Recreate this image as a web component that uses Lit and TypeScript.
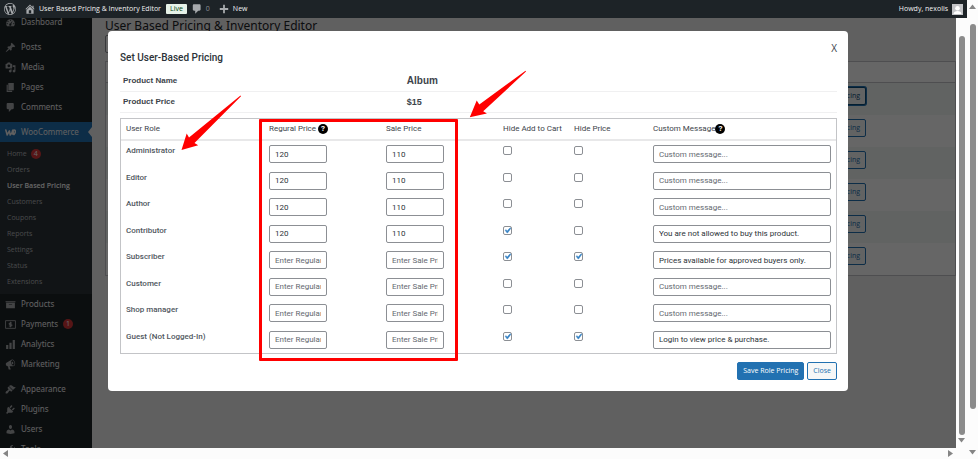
import { LitElement, html, css, svg, nothing } from "lit";
import { customElement, property, state } from "lit/decorators.js";
import { classMap } from "lit/directives/class-map.js";

const icons: Record<string, unknown> = {
  wordpress: svg`<path d="M20 10c0-5.51-4.49-10-10-10C4.48 0 0 4.49 0 10c0 5.52 4.48 10 10 10 5.51 0 10-4.48 10-10zM7.78 15.37L4.37 6.22c.55-.02 1.17-.08 1.17-.08.5-.06.44-1.13-.06-1.11 0 0-1.45.11-2.37.11-.18 0-.37 0-.58-.01C4.12 2.69 6.87 1.11 10 1.11c2.33 0 4.45.87 6.05 2.34-.68-.11-1.65.39-1.65 1.58 0 .74.45 1.36.9 2.1.35.61.55 1.36.55 2.46 0 1.49-1.4 5-1.4 5l-3.03-8.37c.54-.02.82-.17.82-.17.5-.05.44-1.25-.06-1.22 0 0-1.44.12-2.38.12-.87 0-2.33-.12-2.33-.12-.5-.03-.56 1.2-.06 1.22l.92.08 1.26 3.41zM17.41 10c.24-.64.74-1.87.43-4.25.7 1.29 1.05 2.71 1.05 4.25 0 3.29-1.73 6.24-4.4 7.78.97-2.59 1.94-5.2 2.92-7.78zM6.1 18.09C3.12 16.65 1.11 13.53 1.11 10c0-1.3.23-2.48.72-3.59C3.25 10.3 4.67 14.2 6.1 18.09zm4.03-6.63l2.58 6.98c-.86.29-1.76.45-2.71.45-.79 0-1.57-.11-2.29-.33.81-2.38 1.62-4.74 2.42-7.1z"/>`,
  home: svg`<path d="M16 8.5l1.53 1.53-1.06 1.06L10 4.6l-6.47 6.49-1.06-1.06L10 2.5l4 4v-2h2v4zm-6-2.46l6 5.99V18H4v-5.97zM12 17v-5H8v5h4z"/>`,
  comments: svg`<path d="M5 2h9c1.1 0 2 .9 2 2v7c0 1.1-.9 2-2 2h-2l-5 5v-5H5c-1.1 0-2-.9-2-2V4c0-1.1.9-2 2-2z"/>`,
  plus: svg`<path d="M8.5 3h3v5.5H17v3h-5.500V17h-3v-5.500H3v-3h5.500z"/>`,
  dashboard: svg`<path fill-rule="evenodd" d="M3.760 17h12.480c1.100-1.370 1.760-3.110 1.760-5 0-4.420-3.580-8-8-8s-8 3.580-8 8c0 1.890.660 3.630 1.760 5zM10 5a1 1 0 1 1 0 2 1 1 0 0 1 0-2zM5.500 7a1 1 0 1 1 0 2 1 1 0 0 1 0-2zM14 6.500L11.300 12.800a2 2 0 1 1-1.500-.800zM4 11a1 1 0 1 1 0 2 1 1 0 0 1 0-2zM16 11a1 1 0 1 1 0 2 1 1 0 0 1 0-2z"/>`,
  posts: svg`<path d="M10.440 3.020l1.820-1.820 6.360 6.350-1.830 1.820c-1.050-.68-2.480-.57-3.410.36l-.75.75c-.92.93-1.040 2.350-.35 3.410l-1.830 1.820-2.410-2.410-2.800 2.790c-.42.42-3.380 2.710-3.800 2.290s1.860-3.390 2.280-3.810l2.790-2.790L4.100 9.360l1.830-1.820c1.050.69 2.480.57 3.400-.36l.75-.75c.93-.92 1.050-2.350.36-3.410z"/>`,
  media: svg`<path d="M13 11V4c0-.55-.45-1-1-1h-1.670L9 1H5L3.670 3H2c-.55 0-1 .45-1 1v7c0 .55.45 1 1 1h10c.55 0 1-.45 1-1zM7 4.500c1.380 0 2.500 1.120 2.500 2.500S8.380 9.500 7 9.500 4.500 8.380 4.500 7 5.620 4.500 7 4.500zM14 6h5v10.500c0 1.380-1.120 2.500-2.500 2.500S14 17.880 14 16.500s1.120-2.500 2.500-2.500c.17 0 .34.02.5.05V9h-3V6zm-4 8.050V13h2v3.500c0 1.380-1.120 2.500-2.500 2.500S7 17.880 7 16.500 8.120 14 9.500 14c.17 0 .34.02.5.05z"/>`,
  pages: svg`<path d="M6 15V2h10v13H6zm-1 1h8v2H3V5h2v11z"/>`,
  woo: svg`<path d="M1.500 5.500L4 14.500 8 7l1.500 7.500C12 12 14 9 14.500 5.500 12 9 13 14 16.500 13.500c3-3 3-8 .5-8-2 0-3 4-1.500 6.500" fill="none" stroke="currentColor" stroke-width="2.800" stroke-linejoin="round" stroke-linecap="round"/>`,
  products: svg`<path d="M19 4v2H1V4h18zM2 7h16v10H2V7zm11 3V9H7v1h6z"/>`,
  payments: svg`<path fill="none" stroke="currentColor" stroke-width="1.600" d="M1 3h18v14H1z"/><path fill="none" stroke="currentColor" stroke-width="1.900" d="M12.800 7.200H9.200c-2.200 0-2.200 2.700 0 2.700h1.600c2.400 0 2.400 2.900 0 2.900H7M10 5v10"/>`,
  analytics: svg`<path d="M18 18V2h-4v16h4zm-6 0V7H8v11h4zm-6 0v-7H2v7h4z"/>`,
  marketing: svg`<path d="M18.150 5.940c.46 1.620.38 3.220-.02 4.480-.42 1.280-1.260 2.180-2.300 2.480-.16.06-.26.06-.4.06-.06.02-.12.02-.18.02-.06.02-.14.02-.22.02h-6.800l2.220 5.500c.02.14-.06.26-.14.34-.08.1-.24.16-.34.16H6.950c-.1 0-.26-.06-.34-.16-.08-.08-.16-.2-.14-.34l-1-5.500H4.250l-.02-.02c-.5.06-1.080-.18-1.540-.62s-.88-1.080-1.060-1.880c-.24-.8-.2-1.560-.02-2.200.18-.62.58-1.080 1.060-1.300l.02-.02 9-5.400c.1-.06.18-.1.24-.16.06-.04.14-.08.24-.12.16-.08.28-.12.5-.18 1.040-.3 2.240.1 3.220.98s1.840 2.240 2.260 3.860zm-2.580 5.980h-.02c.4-.1.74-.34 1.040-.7.58-.7.86-1.760.86-3.040 0-.64-.1-1.300-.28-1.980-.34-1.360-1.020-2.500-1.780-3.240s-1.680-1.100-2.460-.88c-.82.22-1.400.96-1.700 2-.32 1.040-.28 2.360.06 3.720.38 1.360 1 2.500 1.800 3.240.78.74 1.620 1.100 2.480.88zm-2.540-7.080c.22-.04.42-.02.62.04.38.16.76.48 1.020 1s.42 1.200.42 1.780c0 .3-.04.56-.12.8-.18.48-.44.84-.86.94-.34.1-.8-.06-1.140-.4s-.64-.86-.78-1.500c-.18-.62-.12-1.240.02-1.720s.48-.84.82-.94z"/>`,
  appearance: svg`<path d="M14.480 11.060L7.410 3.990l1.500-1.500c.5-.56 2.300-.47 3.510.32 1.210.8 1.430 1.280 2.910 2.100 1.180.64 2.450 1.260 4.450.85zm-.71.71L6.700 4.700 4.930 6.470c-.39.39-.39 1.020 0 1.410l1.060 1.060c.39.39.39 1.030 0 1.420-.6.6-1.430 1.110-2.210 1.690-.35.26-.7.53-1.010.84C1.430 14.230.4 16.080 1.400 17.070c.99 1 2.840-.03 4.180-1.360.31-.31.58-.66.85-1.020.57-.78 1.080-1.610 1.690-2.210.39-.39 1.020-.39 1.410 0l1.060 1.060c.39.39 1.020.39 1.410 0z"/>`,
  plugins: svg`<path d="M13.110 4.360L9.870 7.600 8 5.730l3.240-3.240c.35-.34 1.050-.2 1.560.32.52.51.66 1.210.31 1.550zm-8 1.770l.91-1.120 9.010 9.010-1.190.84c-.71.71-2.630 1.160-3.820 1.160H6.140L4.900 17.260c-.59.59-1.540.59-2.120 0-.59-.58-.59-1.530 0-2.120l1.240-1.240v-3.880c0-1.130.4-3.190 1.090-3.890zm7.260 3.970l3.240-3.240c.34-.35 1.040-.21 1.550.31.52.51.66 1.210.31 1.550l-3.240 3.250z"/>`,
  users: svg`<path d="M10 9.250c-2.270 0-2.730-3.440-2.730-3.440C7 4.020 7.820 2 9.970 2c2.160 0 2.980 2.020 2.710 3.810 0 0-.41 3.440-2.680 3.440zm0 2.570L12.720 10c2.390 0 4.520 2.330 4.520 4.530v2.490s-3.650 1.130-7.240 1.130c-3.650 0-7.240-1.130-7.240-1.130v-2.490c0-2.250 1.940-4.480 4.470-4.480z"/>`,
  tools: svg`<path d="M16.680 9.770c-1.340 1.340-3.300 1.670-4.950.99l-5.410 6.520c-.99.99-2.590.99-3.580 0s-.99-2.590 0-3.570l6.520-5.420c-.68-1.650-.35-3.610.99-4.950 1.280-1.280 3.120-1.620 4.720-1.060l-2.890 2.890 2.820 2.820 2.860-2.870c.53 1.580.18 3.390-1.080 4.650z"/>`,
};

@customElement("wp-icon")
class WpIcon extends LitElement {
  @property() name = "";
  static styles = css`
    :host { display: block; width: 12px; height: 12px; flex: none; }
    svg { display: block; width: 100%; height: 100%; fill: currentColor; }
  `;
  render() {
    return html`<svg viewBox="0 0 20 20" aria-hidden="true">${icons[this.name]}</svg>`;
  }
}

@customElement("admin-bar")
class AdminBar extends LitElement {
  static styles = css`
    :host {
      display: flex; align-items: center; height: 18px; padding: 0 4px;
      background: #1d2327; color: #f0f0f1;
      font: 500 7px/12px "Open Sans", "Noto Sans", sans-serif;
    }
    a { display: flex; align-items: center; color: inherit; text-decoration: none; }
    wp-icon { color: #a7aaad; }
    .home { margin-left: 8px; gap: 3px; }
    .live {
      margin-left: 5px; padding: 0 4px; line-height: 10px; border-radius: 1px;
      background: #e6f2e8; color: #00450c;
    }
    .comments { margin-left: 4px; gap: 3px; color: #8c8f94; font-weight: 400; }
    .new { margin-left: 8px; gap: 3px; }
    .account { margin-left: auto; gap: 4px; }
    .avatar { width: 11px; height: 11px; background: #c3c4c7; fill: #fff; }
  `;
  render() {
    return html`
      <a href="#" aria-label="About WordPress"><wp-icon name="wordpress"></wp-icon></a>
      <a class="home" href="#"><wp-icon name="home"></wp-icon>User Based Pricing &amp; Inventory Editor</a>
      <span class="live">Live</span>
      <a class="comments" href="#"><wp-icon name="comments"></wp-icon>0</a>
      <a class="new" href="#"><wp-icon name="plus"></wp-icon>New</a>
      <a class="account" href="#">Howdy, nexolis
        <svg class="avatar" viewBox="0 0 11 11" aria-hidden="true"><circle cx="5.500" cy="4.300" r="2.300"/><path d="M1.500 10c0-4 8-4 8 0z"/></svg>
      </a>
    `;
  }
}

interface MenuItem { icon: string; label: string; count?: number; }

const menuGroups: MenuItem[][] = [
  [{ icon: "dashboard", label: "Dashboard" }],
  [
    { icon: "posts", label: "Posts" },
    { icon: "media", label: "Media" },
    { icon: "pages", label: "Pages" },
    { icon: "comments", label: "Comments" },
  ],
  [
    { icon: "woo", label: "WooCommerce" },
    { icon: "products", label: "Products" },
    { icon: "payments", label: "Payments", count: 1 },
    { icon: "analytics", label: "Analytics" },
    { icon: "marketing", label: "Marketing" },
  ],
  [
    { icon: "appearance", label: "Appearance" },
    { icon: "plugins", label: "Plugins" },
    { icon: "users", label: "Users" },
    { icon: "tools", label: "Tools" },
  ],
];

const subMenu = ["Home", "Orders", "User Based Pricing", "Customers", "Coupons", "Reports", "Settings", "Status", "Extensions"];

@customElement("admin-menu")
class AdminMenu extends LitElement {
  static styles = css`
    :host {
      display: block; width: 92px; flex: none; overflow: hidden; background: #1d2327;
      color: #f0f0f1; font: 8px/12px "Noto Sans", "Open Sans", sans-serif;
    }
    nav { display: flex; flex-direction: column; gap: 5px; margin-top: -6px; }
    ul { list-style: none; margin: 0; padding: 0; }
    a { color: inherit; text-decoration: none; }
    .item { display: flex; align-items: center; height: 20px; padding-left: 5px; gap: 5px; }
    .item wp-icon { width: 11px; height: 11px; color: #a7aaad; }
    .current { background: #2271b1; position: relative; }
    .current wp-icon { color: #f0f0f1; }
    .current::after {
      content: ""; position: absolute; right: 0; top: 5px;
      border: 5px solid transparent; border-left: 0; border-right: 4px solid #f0f0f1;
    }
    .sub { padding: 4px 0; background: #2c3338; font: 7px/12px "Open Sans", "Noto Sans", sans-serif; color: #b4b7ba; }
    .sub a { display: flex; align-items: center; height: 16px; padding-left: 7px; gap: 4px; }
    .sub .here { color: #fff; font-weight: 600; }
    .count {
      width: 10px; border-radius: 5px; background: #d63638; color: #fff;
      font-size: 7px; line-height: 10px; text-align: center;
    }
  `;
  render() {
    return html`<nav aria-label="Main menu">
      ${menuGroups.map((group) => html`<ul>
        ${group.map((item) => html`<li>
          <a href="#" class=${classMap({ item: true, current: item.icon === "woo" })}>
            <wp-icon name=${item.icon}></wp-icon>${item.label}
            ${item.count ? html`<span class="count">${item.count}</span>` : nothing}
          </a>
          ${item.icon === "woo" ? html`<ul class="sub">
            ${subMenu.map((label) => html`<li><a href="#" class=${classMap({ here: label === "User Based Pricing" })}>${label}
              ${label === "Home" ? html`<span class="count">4</span>` : nothing}</a></li>`)}
          </ul>` : nothing}
        </li>`)}
      </ul>`)}
    </nav>`;
  }
}

@customElement("product-list")
class ProductList extends LitElement {
  static styles = css`
    :host {
      display: block; flex: 1; min-width: 0; padding-left: 13px; overflow: hidden;
      background: #f0f0f1; color: #1d2327; font: 7px/12px "Open Sans", "Noto Sans", sans-serif;
    }
    h1 { margin: 0; font: 400 12px/16px "Noto Sans", "Open Sans", sans-serif; }
    .search {
      display: block; box-sizing: border-box; width: 120px; height: 18px; margin: 1px 0 8px;
      border: 1px solid #8c8f94; border-radius: 2px; background: #fff;
    }
    .list { border: 1px solid #c3c4c7; background: #fff; }
    .head { height: 20px; border-bottom: 1px solid #c3c4c7; }
    .row { display: flex; align-items: flex-start; justify-content: flex-end; height: 28px; padding: 4px 89px 0 0; }
    .row:nth-child(even) { background: #f3f7f4; }
    button {
      height: 18px; padding: 0 5px; border: 1px solid #2271b1; border-radius: 2px;
      background: #f6f7f7; color: #2271b1; font: inherit;
    }
    .focused { border-color: #0a4b78; color: #0a4b78; box-shadow: 0 0 0 1px #2271b1; }
  `;
  render() {
    return html`
      <h1>User Based Pricing &amp; Inventory Editor</h1>
      <input class="search" type="search" aria-label="Search products" />
      <div class="list">
        <div class="head"></div>
        ${[0, 1, 2, 3, 4, 5].map((i) => html`<div class="row">
          <button class=${classMap({ focused: i === 0 })}>Set Pricing</button>
        </div>`)}
      </div>
    `;
  }
}

interface RoleRow { role: string; regular: string; sale: string; hideCart: boolean; hidePrice: boolean; message: string; }

@customElement("pricing-dialog")
class PricingDialog extends LitElement {
  @state() rows: RoleRow[] = [
    { role: "Administrator", regular: "120", sale: "110", hideCart: false, hidePrice: false, message: "" },
    { role: "Editor", regular: "120", sale: "110", hideCart: false, hidePrice: false, message: "" },
    { role: "Author", regular: "120", sale: "110", hideCart: false, hidePrice: false, message: "" },
    { role: "Contributor", regular: "120", sale: "110", hideCart: true, hidePrice: false, message: "You are not allowed to buy this product." },
    { role: "Subscriber", regular: "", sale: "", hideCart: true, hidePrice: true, message: "Prices available for approved buyers only." },
    { role: "Customer", regular: "", sale: "", hideCart: false, hidePrice: false, message: "" },
    { role: "Shop manager", regular: "", sale: "", hideCart: false, hidePrice: false, message: "" },
    { role: "Guest (Not Logged-In)", regular: "", sale: "", hideCart: true, hidePrice: true, message: "Login to view price & purchase." },
  ];
  static styles = css`
    :host {
      display: block; position: relative; box-sizing: border-box; width: 90%; max-width: 740px;
      padding: 10px 11px 11px 12px; border-radius: 4px; background: #fff; color: #3c434a;
      font: 8px/12px Roboto, "Noto Sans", sans-serif;
    }
    header { display: flex; justify-content: space-between; height: 24px; margin-bottom: 6px; }
    h2 { align-self: flex-end; margin: 0; font-size: 10px; line-height: 14px; font-weight: 500; color: #2c3338; }
    .dismiss { height: 14px; padding: 0; border: 0; background: none; color: #3c434a; font: 10px/14px "Open Sans", sans-serif; }
    table { width: 100%; border-spacing: 0; table-layout: fixed; }
    th, td { padding: 0; text-align: left; font-weight: 400; }
    .product { font: bold 8px/12px "Liberation Sans", Arial, sans-serif; }
    .product th, .product td { height: 20px; border-bottom: 1px solid #f0f0f1; font-weight: bold; }
    .product th { width: 40%; padding-left: 3px; box-sizing: border-box; }
    .product td { font-size: 10px; }
    .product .price { font-size: 9px; }
    .roles { height: 236px; margin-top: 5px; border: 1px solid #c3c4c7; }
    .roles th, .roles td { padding: 0 5px; vertical-align: top; }
    .roles thead th { height: 20px; border-bottom: 2px solid #e8e8e9; vertical-align: middle; white-space: nowrap; padding-right: 0; }
    .roles tbody th { padding-top: 4px; font-weight: 500; color: #50575e; }
    .c-role { width: 20%; } .c-price { width: 117px; } .c-cart { width: 71px; } .c-hide { width: 79px; }
    .help {
      display: inline-block; width: 10px; border-radius: 50%; background: #000; color: #fff;
      font-size: 8px; line-height: 10px; font-weight: 700; text-align: center;
    }
    .text {
      display: block; box-sizing: border-box; width: 58px; height: 18px; margin: 4px 0 0; padding: 0 5px;
      border: 1px solid #8c8f94; border-radius: 2px; background: #fff; color: #2c3338; font: inherit;
    }
    .wide { width: 100%; }
    .text::placeholder { color: #646970; opacity: 1; }
    .tick {
      display: block; appearance: none; width: 9px; height: 9px; margin: 5px 0 0;
      border: 1px solid #8c8f94; border-radius: 2px; background: #fff center / 11px no-repeat;
    }
    .tick:checked {
      background-image: url("data:image/svg+xml,%3Csvg xmlns='http://www.w3.org/2000/svg' viewBox='0 0 20 20'%3E%3Cpath d='M14.83 4.89l1.34.94-5.81 8.38H9.02L5.78 9.67l1.34-1.25 2.57 2.4z' fill='%233582c4' stroke='%233582c4'/%3E%3C/svg%3E");
    }
    footer { display: flex; justify-content: flex-end; gap: 3px; margin-top: 8px; }
    .button {
      height: 18px; padding: 0 5px; border: 1px solid #2271b1; border-radius: 2px;
      background: #f6f7f7; color: #2271b1; font: 500 7px/12px "Open Sans", "Noto Sans", sans-serif;
    }
    .primary { background: #2271b1; color: #fff; }
    .frame { position: absolute; left: 151px; top: 88px; width: 193px; height: 236px; border: 3px solid #f00; border-radius: 1px; pointer-events: none; }
    .arrow { position: absolute; width: 62px; height: 58px; fill: #f00; pointer-events: none; }
    .to-role { left: 73px; top: 64px; }
    .to-price { left: 361px; top: 39px; }
  `;
  private box(row: RoleRow, key: "regular" | "sale" | "message", label: string, placeholder: string) {
    return html`<td><input class=${classMap({ text: true, wide: key === "message" })} type="text"
      aria-label=${`${label} for ${row.role}`} placeholder=${placeholder} .value=${row[key]} /></td>`;
  }
  private tick(row: RoleRow, key: "hideCart" | "hidePrice", label: string) {
    return html`<td><input class="tick" type="checkbox" aria-label=${`${label} for ${row.role}`} .checked=${row[key]} /></td>`;
  }
  render() {
    return html`
      <header><h2>Set User-Based Pricing</h2><button class="dismiss" aria-label="Close dialog">X</button></header>
      <table class="product">
        <tr><th scope="row">Product Name</th><td>Album</td></tr>
        <tr><th scope="row">Product Price</th><td class="price">$15</td></tr>
      </table>
      <table class="roles">
        <colgroup><col class="c-role" /><col class="c-price" /><col class="c-price" /><col class="c-cart" /><col class="c-hide" /><col /></colgroup>
        <thead><tr>
          <th scope="col">User Role</th>
          <th scope="col">Regural Price <span class="help">?</span></th>
          <th scope="col">Sale Price</th>
          <th scope="col">Hide Add to Cart</th>
          <th scope="col">Hide Price</th>
          <th scope="col">Custom Message<span class="help">?</span></th>
        </tr></thead>
        <tbody>${this.rows.map((row) => html`<tr>
          <th scope="row">${row.role}</th>
          ${this.box(row, "regular", "Regular price", "Enter Regular Price")}
          ${this.box(row, "sale", "Sale price", "Enter Sale Price")}
          ${this.tick(row, "hideCart", "Hide add to cart")}
          ${this.tick(row, "hidePrice", "Hide price")}
          ${this.box(row, "message", "Custom message", "Custom message...")}
        </tr>`)}</tbody>
      </table>
      <footer><button class="button primary">Save Role Pricing</button><button class="button">Close</button></footer>
      <div class="frame"></div>
      <svg class="arrow to-role" viewBox="0 0 62 58" aria-hidden="true"><path d="M.5 55L5.700 38.500 8 42.500 59.500.5 60 1.200 13.500 48 17.200 50.200z"/></svg>
      <svg class="arrow to-price" viewBox="0 0 62 58" aria-hidden="true"><path d="M.8 47.200L7.700 30.500 10.300 34.500 56.500.8 57 1.600 14.200 41.200 17.900 43.500z"/></svg>
    `;
  }
}

@customElement("app-root")
class AppRoot extends LitElement {
  static styles = css`
    :host { display: grid; grid-template-columns: minmax(0, 1fr) 11px; height: 100vh; overflow: hidden; background: #fcfcfc; }
    .site { display: flex; flex-direction: column; min-height: 0; }
    admin-bar { position: relative; z-index: 2; flex: none; }
    .view { display: flex; flex: 1; min-height: 0; }
    .screen { position: relative; display: flex; flex: 1; min-width: 0; overflow: hidden; }
    .overlay {
      position: absolute; inset: 0; display: flex; justify-content: center; align-items: flex-start;
      padding-top: 13px; background: rgba(0, 0, 0, 0.6);
    }
    .bar { display: flex; flex-direction: column; align-items: center; width: 11px; background: #fcfcfc; }
    .bar svg { display: block; width: 7px; height: 5px; fill: #858585; flex: none; }
    .thumb { width: 6px; flex: 1; border-radius: 3px; background: #8b8b8b; }
    .outer { box-sizing: border-box; padding: 4px 0; }
    .outer .thumb { margin: 15px 0 41px; }
    .inner { box-sizing: border-box; padding: 18px 0 5px; }
    .inner .thumb { margin-bottom: 3px; }
    .across { display: flex; align-items: center; justify-content: space-between; height: 11px; padding: 0 14px 0 3px; box-sizing: border-box; }
    .across svg { display: block; width: 5px; height: 7px; fill: #858585; }
  `;
  render() {
    return html`
      <div class="site">
        <admin-bar></admin-bar>
        <div class="view">
          <div class="screen">
            <admin-menu></admin-menu>
            <product-list></product-list>
            <div class="overlay"><pricing-dialog role="dialog" aria-label="Set User-Based Pricing"></pricing-dialog></div>
          </div>
          <div class="bar inner"><div class="thumb"></div><svg viewBox="0 0 7 5"><path d="M0 0h7L3.500 4.500z"/></svg></div>
        </div>
        <div class="across">
          <svg viewBox="0 0 5 7"><path d="M5 0v7L0 3.500z"/></svg>
          <svg viewBox="0 0 5 7"><path d="M0 0v7l5-3.500z"/></svg>
        </div>
      </div>
      <div class="bar outer">
        <svg viewBox="0 0 7 5"><path d="M0 5h7L3.500 .5z"/></svg>
        <div class="thumb"></div>
        <svg viewBox="0 0 7 5"><path d="M0 0h7L3.500 4.500z"/></svg>
      </div>
    `;
  }
}
